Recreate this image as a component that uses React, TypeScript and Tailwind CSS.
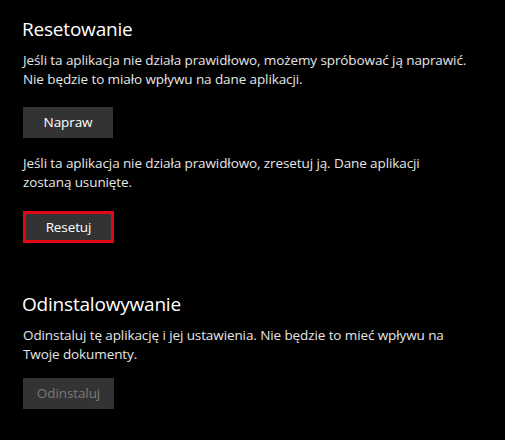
const font = { fontFamily: '"Open Sans", "Noto Sans", sans-serif' }

export default function App() {
  return (
    <div className="w-[505px] h-[440px] bg-black text-white pl-[23px] pt-[15px]" style={font}>
      <h2 className="text-[19px] leading-[28px] tracking-[-0.2px] -ml-px">Resetowanie</h2>
      <p className="mt-[8px] text-[13.5px] leading-[19px] tracking-[-0.1px] text-[#e6e6e6]">
        Jeśli ta aplikacja nie działa prawidłowo, możemy spróbować ją naprawić.
        <br />
        Nie będzie to miało wpływu na dane aplikacji.
      </p>
      <button className="mt-[18px] w-[90px] h-[31px] bg-[#333333] text-[13.5px] tracking-[-0.1px] text-white">
        Napraw
      </button>
      <p className="mt-[16px] text-[13.5px] leading-[19px] tracking-[-0.1px] text-[#e6e6e6]">
        Jeśli ta aplikacja nie działa prawidłowo, zresetuj ją. Dane aplikacji
        <br />
        zostaną usunięte.
      </p>
      <button className="mt-[19px] w-[91px] h-[32px] bg-[#333333] border-[3px] border-[#e30613] text-[13.5px] tracking-[-0.1px] text-white">
        Resetuj
      </button>
      <h2 className="mt-[47px] text-[19px] leading-[28px] tracking-[-0.2px] -ml-px">Odinstalowywanie</h2>
      <p className="mt-[8px] text-[13.5px] leading-[19px] tracking-[-0.1px] text-[#e6e6e6]">
        Odinstaluj tę aplikację i jej ustawienia. Nie będzie to mieć wpływu na
        <br />
        Twoje dokumenty.
      </p>
      <button className="mt-[14px] w-[91px] h-[31px] bg-[#333333] text-[13.5px] tracking-[-0.1px] text-[#7a7a7a]">
        Odinstaluj
      </button>
    </div>
  )
}
